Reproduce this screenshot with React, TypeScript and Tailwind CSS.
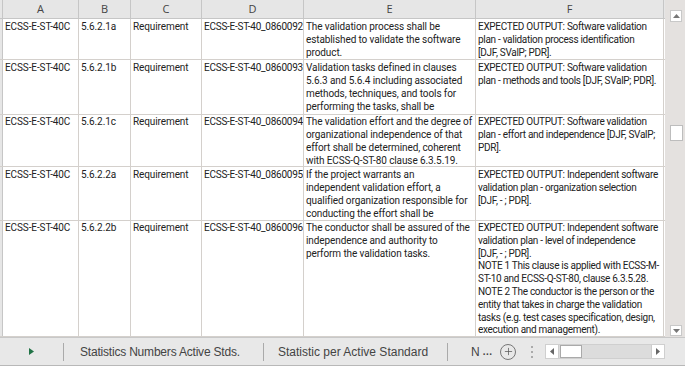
import { Plus } from "lucide-react";

const cols = ["A", "B", "C", "D", "E", "F"];
const widths = ["w-[76px]", "w-[52px]", "w-[71px]", "w-[102px]", "w-[172px]", "w-[188px]"];
const tracks = [
  "tracking-[-0.1px]",
  "tracking-[-0.1px]",
  "tracking-[-0.1px]",
  "tracking-[-0.25px]",
  "tracking-[-0.1px]",
  "tracking-[-0.3px]",
];

type Row = { h: string; pt: string; lh: string; cells: string[][] };

const rows: Row[] = [
  {
    h: "h-[41px]",
    pt: "pt-[1px]",
    lh: "leading-[13px]",
    cells: [
      ["ECSS-E-ST-40C"],
      ["5.6.2.1a"],
      ["Requirement"],
      ["ECSS-E-ST-40_0860092"],
      ["The validation process shall be", "established to validate the software", "product."],
      ["EXPECTED OUTPUT: Software validation", "plan - validation process identification", "[DJF, SValP; PDR]."],
    ],
  },
  {
    h: "h-[55px]",
    pt: "pt-[1px]",
    lh: "leading-[13px]",
    cells: [
      ["ECSS-E-ST-40C"],
      ["5.6.2.1b"],
      ["Requirement"],
      ["ECSS-E-ST-40_0860093"],
      ["Validation tasks defined in clauses", "5.6.3 and 5.6.4 including associated", "methods, techniques, and tools for", "performing the tasks, shall be"],
      ["EXPECTED OUTPUT: Software validation", "plan - methods and tools [DJF, SValP; PDR]."],
    ],
  },
  {
    h: "h-[52px]",
    pt: "pt-0",
    lh: "leading-[13px]",
    cells: [
      ["ECSS-E-ST-40C"],
      ["5.6.2.1c"],
      ["Requirement"],
      ["ECSS-E-ST-40_0860094"],
      ["The validation effort and the degree of", "organizational independence of that", "effort shall be determined, coherent", "with ECSS-Q-ST-80 clause 6.3.5.19."],
      ["EXPECTED OUTPUT: Software validation", "plan - effort and independence [DJF, SValP;", "PDR]."],
    ],
  },
  {
    h: "h-[54px]",
    pt: "pt-[1px]",
    lh: "leading-[13px]",
    cells: [
      ["ECSS-E-ST-40C"],
      ["5.6.2.2a"],
      ["Requirement"],
      ["ECSS-E-ST-40_0860095"],
      ["If the project warrants an", "independent validation effort, a", "qualified organization responsible for", "conducting the effort shall be"],
      ["EXPECTED OUTPUT: Independent software", "validation plan - organization selection", "[DJF, - ; PDR]."],
    ],
  },
  {
    h: "h-[116px]",
    pt: "pt-[1px]",
    lh: "leading-[12.8px]",
    cells: [
      ["ECSS-E-ST-40C"],
      ["5.6.2.2b"],
      ["Requirement"],
      ["ECSS-E-ST-40_0860096"],
      ["The conductor shall be assured of the", "independence and authority to", "perform the validation tasks."],
      [
        "EXPECTED OUTPUT: Independent software",
        "validation plan - level of independence",
        "[DJF, - ; PDR].",
        "NOTE 1 This clause is applied with ECSS-M-",
        "ST-10 and ECSS-Q-ST-80, clause 6.3.5.28.",
        "NOTE 2 The conductor is the person or the",
        "entity that takes in charge the validation",
        "tasks (e.g. test cases specification, design,",
        "execution and management).",
      ],
    ],
  },
];

function Grid() {
  return (
    <div className="flex flex-col w-[665px] shrink-0">
      {/* column headers */}
      <div className="flex h-[19px] shrink-0 bg-[#e6e6e6] border-b border-[#c6c6c6]">
        <div className="w-[3px] border-r border-[#c6c6c6]" />
        {cols.map((c, i) => (
          <div
            key={c}
            className={`${widths[i]} shrink-0 flex items-center justify-center text-[11px] text-[#444] border-r border-[#c6c6c6]`}
          >
            {c}
          </div>
        ))}
      </div>
      {rows.map((r, ri) => (
        <div key={ri} className={`flex ${r.h} shrink-0 bg-white border-b border-[#d4d0cc]`}>
          <div className="w-[3px] bg-[#e6e6e6] border-r border-[#c6c6c6]" />
          {r.cells.map((lines, ci) => (
            <div
              key={ci}
              className={`${widths[ci]} ${r.pt} ${r.lh} ${tracks[ci]} shrink-0 overflow-hidden border-r border-[#d4d0cc] pl-[2px] text-[10px] text-[#222] font-['Roboto',sans-serif]`}
            >
              {lines.map((l, li) => (
                <div key={li} className="whitespace-nowrap">
                  {l}
                </div>
              ))}
            </div>
          ))}
        </div>
      ))}
    </div>
  );
}

function VScroll() {
  return (
    <div className="flex-1 bg-[#e4e1df] flex flex-col items-center pt-[10px] pb-[1px] pl-[2px]">
      <div className="w-[12px] h-[12px] bg-white border border-[#c8c8c8] flex items-center justify-center">
        <svg width="7" height="4" viewBox="0 0 7 4">
          <path d="M0 4 L3.5 0 L7 4 Z" fill="#777" />
        </svg>
      </div>
      <div className="mt-[103px] w-[13px] h-[16px] bg-white border border-[#bdbdbd]" />
      <div className="flex-1" />
      <div className="w-[12px] h-[11px] bg-white border border-[#c8c8c8] flex items-center justify-center">
        <svg width="7" height="4" viewBox="0 0 7 4">
          <path d="M0 0 L3.5 4 L7 0 Z" fill="#777" />
        </svg>
      </div>
    </div>
  );
}

function TabBar() {
  return (
    <div className="h-[29px] bg-[#e8e8e8] border-t border-[#c8c8c8] border-b border-b-[#b8b8b8] flex items-center text-[12px] text-[#444] font-['Liberation_Sans',sans-serif]">
      <div className="w-[63px] flex items-center justify-center">
        <svg width="5" height="7" viewBox="0 0 5 7">
          <path d="M0 0 L5 3.5 L0 7 Z" fill="#217346" />
        </svg>
      </div>
      <div className="w-px h-[18px] bg-[#aaa]" />
      <div className="w-[199px] pl-[16px] whitespace-nowrap tracking-[-0.2px]">Statistics Numbers Active Stds.</div>
      <div className="w-px h-[18px] bg-[#aaa]" />
      <div className="w-[183px] pl-[14px] whitespace-nowrap">Statistic per Active Standard</div>
      <div className="w-px h-[18px] bg-[#aaa]" />
      <div className="w-[44px] pl-[23px] whitespace-nowrap flex items-center gap-[3px]">
        <span>N</span>
        <span className="font-bold text-[10px] tracking-[0.5px]">...</span>
      </div>
      <div className="w-[16px] h-[16px] rounded-full border border-[#777] flex items-center justify-center ml-[8px]">
        <Plus size={11} color="#555" strokeWidth={1.6} />
      </div>
      <div className="ml-[15px] flex flex-col gap-[3px]">
        <div className="w-[2px] h-[2px] bg-[#aaa]" />
        <div className="w-[2px] h-[2px] bg-[#aaa]" />
        <div className="w-[2px] h-[2px] bg-[#aaa]" />
      </div>
      <div className="ml-[12px] w-[120px] h-[15px] bg-[#dcdcdc] border border-[#cfcfcf] flex items-center">
        <div className="w-[13px] h-[13px] bg-white flex items-center justify-center border-r border-[#ccc]">
          <svg width="4" height="7" viewBox="0 0 4 7">
            <path d="M4 0 L0 3.5 L4 7 Z" fill="#666" />
          </svg>
        </div>
        <div className="w-[22px] h-[13px] bg-white border border-[#aaa] ml-[1px]" />
        <div className="flex-1" />
        <div className="w-[13px] h-[13px] bg-white flex items-center justify-center border-l border-[#ccc]">
          <svg width="4" height="7" viewBox="0 0 4 7">
            <path d="M0 0 L4 3.5 L0 7 Z" fill="#666" />
          </svg>
        </div>
      </div>
    </div>
  );
}

export default function App() {
  return (
    <div className="w-[685px] h-[366px] overflow-hidden bg-[#e6e6e6] flex flex-col font-['Open_Sans','Liberation_Sans',sans-serif]">
      <div className="flex h-[337px] shrink-0 overflow-hidden">
        <Grid />
        <VScroll />
      </div>
      <TabBar />
    </div>
  );
}
